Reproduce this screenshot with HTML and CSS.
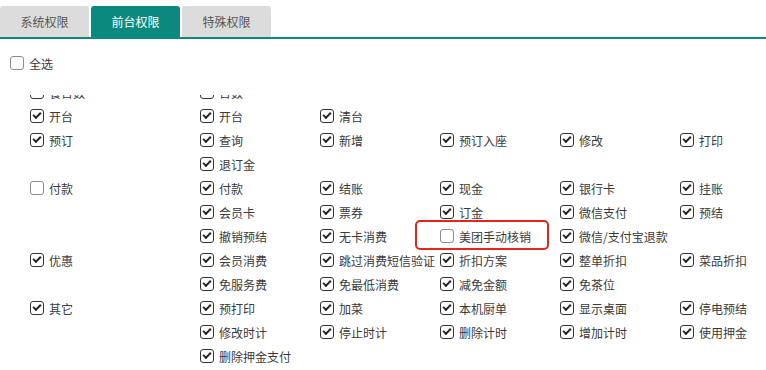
FILE: index.html
```html
<!DOCTYPE html>
<html>
    <head>
        <meta charset="UTF-8">
        <title>权限设置</title>
        <link rel="stylesheet" href="styles.css">
    </head>
    <body>
        <div class="tabs">
            <div class="tab">系统权限</div>
            <div class="tab active">前台权限</div>
            <div class="tab">特殊权限</div>
        </div>

        <div class="select-all">
            <span class="box"></span>全选
        </div>

        <div class="perm-scroll" id="permScroll">
            <div class="group">
                <div class="cat"><span class="box on"></span>餐台数</div>
                <div class="items">
                    <div class="item"><span class="box on"></span>台数</div>
                </div>
            </div>
            <div class="group">
                <div class="cat"><span class="box on"></span>开台</div>
                <div class="items">
                    <div class="item"><span class="box on"></span>开台</div>
                    <div class="item"><span class="box on"></span>清台</div>
                </div>
            </div>
            <div class="group">
                <div class="cat"><span class="box on"></span>预订</div>
                <div class="items">
                    <div class="item"><span class="box on"></span>查询</div>
                    <div class="item"><span class="box on"></span>新增</div>
                    <div class="item"><span class="box on"></span>预订入座</div>
                    <div class="item"><span class="box on"></span>修改</div>
                    <div class="item"><span class="box on"></span>打印</div>
                    <div class="item"><span class="box on"></span>退订金</div>
                </div>
            </div>
            <div class="group">
                <div class="cat"><span class="box"></span>付款</div>
                <div class="items">
                    <div class="item"><span class="box on"></span>付款</div>
                    <div class="item"><span class="box on"></span>结账</div>
                    <div class="item"><span class="box on"></span>现金</div>
                    <div class="item"><span class="box on"></span>银行卡</div>
                    <div class="item"><span class="box on"></span>挂账</div>
                    <div class="item"><span class="box on"></span>会员卡</div>
                    <div class="item"><span class="box on"></span>票券</div>
                    <div class="item"><span class="box on"></span>订金</div>
                    <div class="item"><span class="box on"></span>微信支付</div>
                    <div class="item"><span class="box on"></span>预结</div>
                    <div class="item"><span class="box on"></span>撤销预结</div>
                    <div class="item"><span class="box on"></span>无卡消费</div>
                    <div class="item"><span class="box"></span>美团手动核销<span class="mark"></span></div>
                    <div class="item wide"><span class="box on"></span>微信/支付宝退款</div>
                </div>
            </div>
            <div class="group">
                <div class="cat"><span class="box on"></span>优惠</div>
                <div class="items">
                    <div class="item"><span class="box on"></span>会员消费</div>
                    <div class="item"><span class="box on"></span>跳过消费短信验证</div>
                    <div class="item"><span class="box on"></span>折扣方案</div>
                    <div class="item"><span class="box on"></span>整单折扣</div>
                    <div class="item"><span class="box on"></span>菜品折扣</div>
                    <div class="item"><span class="box on"></span>免服务费</div>
                    <div class="item"><span class="box on"></span>免最低消费</div>
                    <div class="item"><span class="box on"></span>减免金额</div>
                    <div class="item"><span class="box on"></span>免茶位</div>
                </div>
            </div>
            <div class="group">
                <div class="cat"><span class="box on"></span>其它</div>
                <div class="items">
                    <div class="item"><span class="box on"></span>预打印</div>
                    <div class="item"><span class="box on"></span>加菜</div>
                    <div class="item"><span class="box on"></span>本机厨单</div>
                    <div class="item"><span class="box on"></span>显示桌面</div>
                    <div class="item"><span class="box on"></span>停电预结</div>
                    <div class="item"><span class="box on"></span>修改时计</div>
                    <div class="item"><span class="box on"></span>停止时计</div>
                    <div class="item"><span class="box on"></span>删除计时</div>
                    <div class="item"><span class="box on"></span>增加计时</div>
                    <div class="item"><span class="box on"></span>使用押金</div>
                    <div class="item"><span class="box on"></span>删除押金支付</div>
                </div>
            </div>
        </div>
        <script src="app.js"></script>
    </body>
</html>
```

FILE: styles.css
```css
body {
    font-family: "Noto Sans CJK SC", "Noto Sans", sans-serif;
    font-size: 12px;
    color: #3a3a3a;
    background-color: #fff;
    margin: 0;
    height: 100vh;
    display: flex;
    flex-direction: column;
    overflow: hidden;
}
.tabs {
    display: flex;
    gap: 2px;
    padding-top: 6px;
    border-bottom: 2px solid #0a8a7f;
}
.tab {
    width: 89px;
    height: 31px;
    line-height: 31px;
    text-align: center;
    background-color: #dcdcdc;
    color: #555;
    border-radius: 3px 3px 0 0;
}
.tab.active {
    background-color: #0a8a7f;
    color: #fff;
}
.select-all {
    display: flex;
    align-items: center;
    height: 24px;
    margin-top: 12px;
    padding-left: 10px;
}
.box {
    position: relative;
    flex: none;
    width: 12px;
    height: 12px;
    margin-right: 5px;
    border: 1px solid #8c8c8c;
    border-radius: 3px;
    background-color: #fff;
}
.box.on {
    border-color: #333;
}
.box.on::after {
    content: "";
    position: absolute;
    left: 2px;
    top: 2px;
    width: 6px;
    height: 3px;
    border-left: 2px solid #222;
    border-bottom: 2px solid #222;
    transform: rotate(-45deg);
}
.perm-scroll {
    flex: 1;
    margin-top: 20px;
    padding: 0 0 20px 30px;
    overflow: hidden;
}
.group {
    display: flex;
}
.cat {
    flex: none;
    width: 170px;
    height: 24px;
    display: flex;
    align-items: center;
}
.items {
    flex: none;
    display: grid;
    grid-template-columns: repeat(5, 120px);
    grid-auto-rows: 24px;
}
.item {
    position: relative;
    display: flex;
    align-items: center;
    white-space: nowrap;
}
.item.wide {
    grid-column: span 2;
}
.mark {
    position: absolute;
    left: -25px;
    top: -4px;
    width: 130px;
    height: 26px;
    border: 2px solid #e3251b;
    border-radius: 5px;
}
```

FILE: app.js
```js
document.getElementById('permScroll').scrollTop = 15;
```
